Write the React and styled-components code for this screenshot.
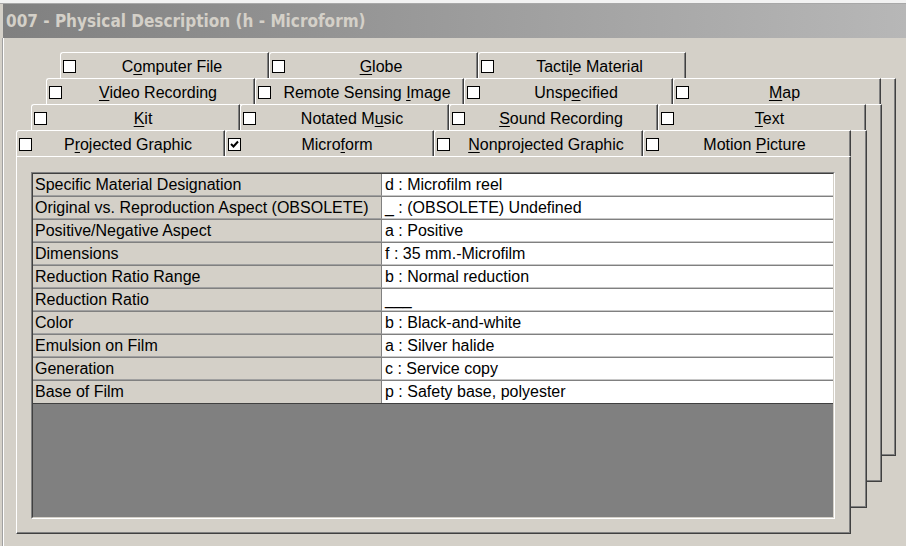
import React from "react"
import styled, { createGlobalStyle } from "styled-components"

const GlobalStyle = createGlobalStyle`
  html, body {
    margin: 0;
    padding: 0;
    background: #d4d0c8;
  }
  body {
    font-family: "Liberation Sans", Arial, sans-serif;
  }
`

const tabRows = [
  { offset: 44, tabs: ["C&omputer File", "&Globe", "Tacti&le Material"] },
  { offset: 30, tabs: ["&Video Recording", "Remote Sensing &Image", "Unsp&ecified", "&Map"] },
  { offset: 15, tabs: ["&Kit", "Notated M&usic", "&Sound Recording", "&Text"] },
  { offset: 0, tabs: ["P&rojected Graphic", "Micro&form", "&Nonprojected Graphic", "Motion &Picture"] },
]

const fields = [
  ["Specific Material Designation", "d : Microfilm reel"],
  ["Original vs. Reproduction Aspect (OBSOLETE)", "_ : (OBSOLETE) Undefined"],
  ["Positive/Negative Aspect", "a : Positive"],
  ["Dimensions", "f : 35 mm.-Microfilm"],
  ["Reduction Ratio Range", "b : Normal reduction"],
  ["Reduction Ratio", "___"],
  ["Color", "b : Black-and-white"],
  ["Emulsion on Film", "a : Silver halide"],
  ["Generation", "c : Service copy"],
  ["Base of Film", "p : Safety base, polyester"],
]

// pages of the other tab rows peeking out behind the active one
const backPages = [
  { left: 56, top: 40 },
  { left: 42, top: 66 },
  { left: 27, top: 92 },
]

const Mnemonic = ({ text }) => {
  const i = text.indexOf("&")
  if (i < 0) return text
  return (
    <>
      {text.slice(0, i)}
      <u>{text[i + 1]}</u>
      {text.slice(i + 2)}
    </>
  )
}

export default function App() {
  return (
    <>
      <GlobalStyle />
      <Window>
        <TopStrip />
        <TitleBar>007 - Physical Description (h - Microform)</TitleBar>
        <Body>
          {backPages.map((p, i) => (
            <BackPage key={i} style={{ left: p.left, top: p.top }} />
          ))}
          {tabRows.map((row, r) => (
            <TabRow key={r} $offset={row.offset}>
              {row.tabs.map(t => (
                <Tab key={t}>
                  <CheckBox>
                    {t === "Micro&form" && (
                      <svg width="11" height="11" viewBox="0 0 11 11">
                        <path d="M2 5 L4.5 7.5 L9 2.5" fill="none" stroke="#000" strokeWidth="2" />
                      </svg>
                    )}
                  </CheckBox>
                  <TabLabel>
                    <Mnemonic text={t} />
                  </TabLabel>
                </Tab>
              ))}
            </TabRow>
          ))}
          <Panel>
            <GridOuter>
              <GridInner>
                {fields.map(([label, value], i) => (
                  <FieldRow key={label} $last={i === fields.length - 1}>
                    <LabelCell>{label}</LabelCell>
                    <ValueCell>{value}</ValueCell>
                  </FieldRow>
                ))}
              </GridInner>
            </GridOuter>
          </Panel>
        </Body>
      </Window>
    </>
  )
}

const Window = styled.div`
  width: 906px;
  height: 546px;
  overflow: hidden;
  background: #d4d0c8;
  display: flex;
  flex-direction: column;
`

const TopStrip = styled.div`
  height: 3px;
  background: #f2f2f2;
  border-bottom: 1px solid #a8a8a8;
`

const TitleBar = styled.div`
  margin-left: 3px;
  height: 34px;
  display: flex;
  align-items: center;
  padding-left: 3px;
  background: linear-gradient(to right, #808080, #b7b7b7);
  color: #d4d0c8;
  font-family: "DejaVu Sans Condensed", "DejaVu Sans", sans-serif;
  font-weight: bold;
  font-size: 17px;
  white-space: nowrap;
`

const Body = styled.div`
  position: relative;
  flex: 1;
  margin-left: 3px;
  border-left: 1px solid #fff;
  box-shadow: -1px 0 #a0a0a0;
  padding: 14px 0 0 12px;
`

const BackPage = styled.div`
  position: absolute;
  width: 836px;
  height: 378px;
  box-sizing: border-box;
  background: #d4d0c8;
  border-top: 1px solid #fff;
  border-right: 1px solid #404040;
  border-bottom: 1px solid #404040;
  box-shadow: inset -1px -1px #808080;
`

const TabRow = styled.div`
  position: relative;
  z-index: 1;
  display: flex;
  height: 26px;
  margin-left: ${p => p.$offset}px;
`

const Tab = styled.div`
  width: 209px;
  height: 26px;
  box-sizing: border-box;
  display: flex;
  align-items: center;
  padding: 2px 0 0 2px;
  background: #d4d0c8;
  border-top: 1px solid #fff;
  border-left: 1px solid #fff;
  border-right: 1px solid #404040;
  border-top-left-radius: 3px;
  box-shadow: inset -1px 0 #808080;
  &:last-child {
    width: 208px;
  }
`

const CheckBox = styled.span`
  width: 13px;
  height: 13px;
  box-sizing: border-box;
  border: 1px solid #000;
  background: #fff;
  display: flex;
  align-items: center;
  justify-content: center;
  flex: none;
`

const TabLabel = styled.span`
  flex: 1;
  text-align: center;
  font-size: 16px;
  color: #000;
  white-space: nowrap;
  u {
    text-decoration-thickness: 1px;
    text-underline-offset: 2px;
  }
`

const Panel = styled.div`
  position: relative;
  z-index: 1;
  width: 835px;
  height: 378px;
  box-sizing: border-box;
  background: #d4d0c8;
  border-top: 1px solid #fff;
  border-left: 1px solid #fff;
  border-right: 1px solid #404040;
  border-bottom: 1px solid #404040;
  box-shadow: inset -1px -1px #808080;
  padding: 15px 0 0 14px;
`

const GridOuter = styled.div`
  width: 804px;
  height: 347px;
  box-sizing: border-box;
  border-top: 1px solid #808080;
  border-left: 1px solid #808080;
  border-right: 1px solid #fff;
  border-bottom: 1px solid #fff;
`

const GridInner = styled.div`
  height: 100%;
  box-sizing: border-box;
  border-top: 1px solid #404040;
  border-left: 1px solid #404040;
  border-right: 1px solid #d4d0c8;
  border-bottom: 1px solid #d4d0c8;
  background: #808080;
`

const FieldRow = styled.div`
  display: grid;
  grid-template-columns: 349px 1fr;
  height: 23px;
  box-sizing: border-box;
  border-bottom: 1px solid ${p => (p.$last ? "#404040" : "transparent")};
  font-size: 16px;
  color: #000;
  line-height: 22px;
`

const LabelCell = styled.div`
  background: #d4d0c8;
  padding-left: 2px;
  border-right: 1px solid #808080;
  border-bottom: 1px solid #a0a0a0;
  white-space: nowrap;
  overflow: hidden;
  ${FieldRow}:last-child & {
    border-bottom: none;
  }
`

const ValueCell = styled.div`
  background: #fff;
  padding-left: 3px;
  border-bottom: 1px solid #c8c8c8;
  white-space: nowrap;
  overflow: hidden;
  ${FieldRow}:last-child & {
    border-bottom: none;
  }
`
